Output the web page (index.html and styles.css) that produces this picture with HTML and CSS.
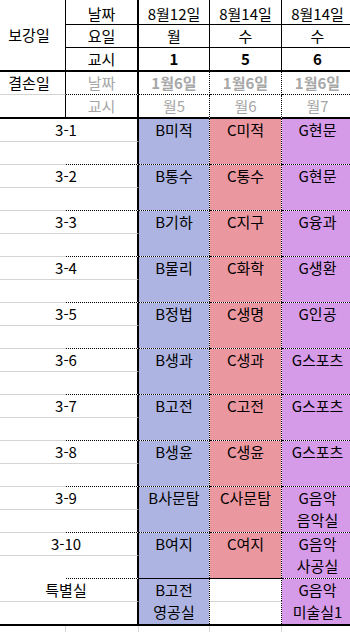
FILE: index.html
```html
<!DOCTYPE html>
<html lang="ko">
<head>
<meta charset="utf-8">
<title>보강 시간표</title>
<link rel="stylesheet" href="styles.css">
</head>
<body>
<div class="sheet">
  <div class="head">
    <div class="title">보강일</div>
    <div class="key r1">날짜</div>
    <div class="val r1">8월12일</div>
    <div class="val r1">8월14일</div>
    <div class="val r1">8월14일</div>
    <div class="key r2">요일</div>
    <div class="val r2">월</div>
    <div class="val r2">수</div>
    <div class="val r2">수</div>
    <div class="key r3">교시</div>
    <div class="val r3 bold">1</div>
    <div class="val r3 bold">5</div>
    <div class="val r3 bold">6</div>
    <div class="side r4">결손일</div>
    <div class="key r4 muted">날짜</div>
    <div class="val r4 muted bold">1월6일</div>
    <div class="val r4 muted bold">1월6일</div>
    <div class="val r4 muted bold">1월6일</div>
    <div class="side r5"></div>
    <div class="key r5 muted">교시</div>
    <div class="val r5 muted">월5</div>
    <div class="val r5 muted">월6</div>
    <div class="val r5 muted">월7</div>
  </div>

  <div class="body">
    <div class="grp first">
      <div class="a"></div><div class="b"></div><div class="lab">3-1</div>
      <div class="cell c3 blue">B미적</div><div class="cell c4 pink">C미적</div><div class="cell c5 violet">G현문</div>
      <div class="a2"></div><div class="b2"></div>
    </div>
    <div class="grp">
      <div class="a"></div><div class="b"></div><div class="lab">3-2</div>
      <div class="cell c3 blue">B통수</div><div class="cell c4 pink">C통수</div><div class="cell c5 violet">G현문</div>
      <div class="a2"></div><div class="b2"></div>
    </div>
    <div class="grp">
      <div class="a"></div><div class="b"></div><div class="lab">3-3</div>
      <div class="cell c3 blue">B기하</div><div class="cell c4 pink">C지구</div><div class="cell c5 violet">G융과</div>
      <div class="a2"></div><div class="b2"></div>
    </div>
    <div class="grp">
      <div class="a"></div><div class="b"></div><div class="lab">3-4</div>
      <div class="cell c3 blue">B물리</div><div class="cell c4 pink">C화학</div><div class="cell c5 violet">G생환</div>
      <div class="a2"></div><div class="b2"></div>
    </div>
    <div class="grp">
      <div class="a"></div><div class="b"></div><div class="lab">3-5</div>
      <div class="cell c3 blue">B정법</div><div class="cell c4 pink">C생명</div><div class="cell c5 violet">G인공</div>
      <div class="a2"></div><div class="b2"></div>
    </div>
    <div class="grp">
      <div class="a"></div><div class="b"></div><div class="lab">3-6</div>
      <div class="cell c3 blue">B생과</div><div class="cell c4 pink">C생과</div><div class="cell c5 violet">G스포츠</div>
      <div class="a2"></div><div class="b2"></div>
    </div>
    <div class="grp">
      <div class="a"></div><div class="b"></div><div class="lab">3-7</div>
      <div class="cell c3 blue">B고전</div><div class="cell c4 pink">C고전</div><div class="cell c5 violet">G스포츠</div>
      <div class="a2"></div><div class="b2"></div>
    </div>
    <div class="grp">
      <div class="a"></div><div class="b"></div><div class="lab">3-8</div>
      <div class="cell c3 blue">B생윤</div><div class="cell c4 pink">C생윤</div><div class="cell c5 violet">G스포츠</div>
      <div class="a2"></div><div class="b2"></div>
    </div>
    <div class="grp">
      <div class="a"></div><div class="b"></div><div class="lab">3-9</div>
      <div class="cell c3 blue">B사문탐</div><div class="cell c4 pink">C사문탐</div><div class="cell c5 violet">G음악<br>음악실</div>
      <div class="a2"></div><div class="b2"></div>
    </div>
    <div class="grp">
      <div class="a"></div><div class="b"></div><div class="lab">3-10</div>
      <div class="cell c3 blue">B여지</div><div class="cell c4 pink">C여지</div><div class="cell c5 violet">G음악<br>사공실</div>
      <div class="a2"></div><div class="b2"></div>
    </div>
    <div class="grp special">
      <div class="a"></div><div class="b"></div><div class="lab">특별실</div>
      <div class="cell c3 blue solid">B고전<br>영공실</div>
      <div class="empty-top"></div>
      <div class="cell c5 violet">G음악<br>미술실1</div>
      <div class="a2"></div><div class="b2"></div>
      <div class="empty-bottom"></div>
    </div>
  </div>

  <div class="tail">
    <div class="t"></div><div class="t"></div><div class="t"></div><div class="t"></div><div class="t last"></div>
  </div>
</div>
</body>
</html>
```

FILE: styles.css
```css
html, body {
  margin: 0;
  padding: 0;
  background: #ffffff;
  overflow: hidden;
}

body {
  font-family: "Noto Sans CJK KR", "Noto Sans", sans-serif;
  font-size: 15px;
  color: #000000;
}

.sheet {
  margin-left: -7px;
  width: 361px;
}

.head,
.grp,
.tail {
  display: grid;
  grid-template-columns: 73px 73px 71px 72px 72px;
}

.head > div,
.grp > div,
.tail > div {
  box-sizing: border-box;
}

/* ---------- header ---------- */
.head {
  grid-template-rows: 25px 23px 24px 23px 24px;
}

.head > div {
  display: flex;
  align-items: center;
  justify-content: center;
  line-height: 22px;
  white-space: nowrap;
}

.title {
  grid-column: 1;
  grid-row: 1 / 4;
  border-right: 1px solid #000;
  border-bottom: 2px solid #000;
}

.key {
  border-right: 2px solid #000;
}

.val {
  border-right: 1px solid #000;
}

.r1 {
  border-bottom: 1px solid #000;
  padding-top: 4px;
}

.r2 {
  border-bottom: 1px solid #000;
}

.r3 {
  border-bottom: 2px solid #000;
}

.side {
  grid-column: 1;
  border-right: 1px solid #000;
}

.side.r4 {
  border-bottom: 1px solid #d4d4d4;
}

.side.r5 {
  border-bottom: 2px solid #000;
}

.key.r4,
.val.r4 {
  border-bottom: 1px dotted #000;
}

.val.r4,
.val.r5 {
  border-right: 1px dotted #000;
}

.key.r5,
.val.r5 {
  border-bottom: 2px solid #000;
}

.bold {
  font-weight: 700;
}

.muted {
  color: #a6a6a6;
}

/* ---------- body ---------- */
.body {
  border-bottom: 2px solid #000;
}

.grp {
  grid-template-rows: 23px 23px;
}

.grp.first {
  grid-template-rows: 22px 23px;
}

.a {
  grid-column: 1;
  grid-row: 1;
  border-top: 1px solid #d4d4d4;
}

.b {
  grid-column: 2;
  grid-row: 1;
  border-top: 1px dotted #000;
  border-right: 2px solid #000;
}

.lab {
  grid-column: 1 / 3;
  grid-row: 1;
  border-top: 1px solid transparent;
  text-align: center;
  line-height: 22px;
  white-space: nowrap;
}

.a2 {
  grid-column: 1;
  grid-row: 2;
  border-top: 1px solid #d4d4d4;
}

.b2 {
  grid-column: 2;
  grid-row: 2;
  border-top: 1px solid #d4d4d4;
  border-right: 2px solid #000;
}

.cell {
  grid-row: 1 / 3;
  border-top: 1px dotted #000;
  border-right: 1px dotted #000;
  background-clip: padding-box;
  text-align: center;
  line-height: 22px;
  white-space: nowrap;
}

.c3 { grid-column: 3; }
.c4 { grid-column: 4; }
.c5 { grid-column: 5; }

.blue { background-color: #adb4e1; }
.pink { background-color: #ea97a0; }
.violet { background-color: #d59ae8; }

.grp.first .a,
.grp.first .b,
.grp.first .lab,
.grp.first .cell {
  border-top: none;
}

.grp.special .a {
  border-top-color: transparent;
}

.grp.special .cell.solid {
  border-top: 1px solid #000;
}

.empty-top {
  grid-column: 4;
  grid-row: 1;
  border-top: 1px solid #000;
  border-right: 1px dotted #000;
}

.empty-bottom {
  grid-column: 4;
  grid-row: 2;
  border-top: 1px solid #d4d4d4;
  border-right: 1px dotted #000;
}

/* ---------- trailing empty row ---------- */
.tail {
  grid-template-rows: 12px;
}

.t {
  border-right: 1px solid #d4d4d4;
}

.t.last {
  border-right: none;
}
```
